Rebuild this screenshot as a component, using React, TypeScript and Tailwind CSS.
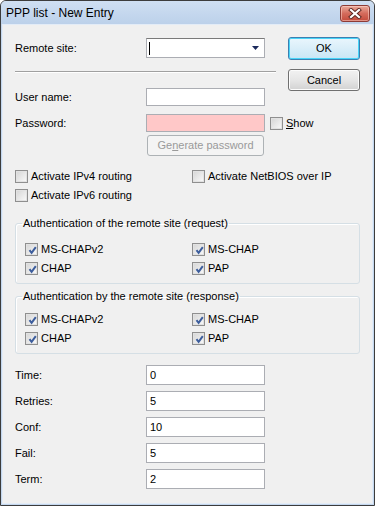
import React from "react";

const font = { fontFamily: '"Liberation Sans", Arial, sans-serif' };

function CheckBox({ checked = false }: { checked?: boolean }) {
  return (
    <span className="relative inline-flex h-[13px] w-[13px] shrink-0 items-center justify-center border border-[#8f8f8f] bg-white">
      <span className="h-[11px] w-[11px] border border-[#e2e2e2] bg-gradient-to-br from-[#d8d8d8] to-[#f7f7f7]" />
      {checked && (
        <svg className="absolute left-[1px] top-[1px]" width="11" height="11" viewBox="0 0 11 11">
          <path d="M2.5 5.2 L4.6 7.8 L8.8 2.2" fill="none" stroke="#3c5d9c" strokeWidth="2" />
        </svg>
      )}
    </span>
  );
}

function Check({ label, checked, children }: { label?: string; checked?: boolean; children?: React.ReactNode }) {
  return (
    <label className="flex h-[13px] items-center gap-[3px] whitespace-nowrap text-[11px] leading-[13px] text-black">
      <CheckBox checked={checked} />
      <span>{children ?? label}</span>
    </label>
  );
}

function TextBox({ value = "", pink = false, h = "h-[18px]" }: { value?: string; pink?: boolean; h?: string }) {
  return (
    <div
      className={`${h} flex w-[119px] shrink-0 items-center border border-[#abadb3] pl-[3px] text-[11px] leading-[16px] text-black ${
        pink ? "bg-[#ffc8c8]" : "bg-white"
      }`}
    >
      {value}
    </div>
  );
}

function Row({ label, children, h = "h-[18px]" }: { label: string; children: React.ReactNode; h?: string }) {
  return (
    <div className={`flex items-center ${h}`}>
      <span className="w-[131px] shrink-0 text-[11px] text-black">{label}</span>
      {children}
    </div>
  );
}

function Group({ title, mt, pt }: { title: string; mt: string; pt: string }) {
  return (
    <fieldset
      className={`${mt} mr-[12px] rounded-[3px] border border-[#d5dfe5] pb-[8px] shadow-[inset_1px_1px_0_#ffffff]`}
    >
      <legend className="ml-[6px] px-[1px] text-[11px] leading-[14px] text-black">{title}</legend>
      <div className={`grid grid-cols-[167px_1fr] gap-y-[6px] pl-[9px] ${pt}`}>
        <Check label="MS-CHAPv2" checked />
        <Check label="MS-CHAP" checked />
        <Check label="CHAP" checked />
        <Check label="PAP" checked />
      </div>
    </fieldset>
  );
}

export default function App() {
  return (
    <div className="h-[506px] w-[375px] bg-white" style={font}>
      <div className="flex h-full w-full flex-col rounded-t-[6px] border border-[#3c3c3c] bg-[#c4d7ee]">
        {/* Title bar */}
        <div className="flex h-[23px] shrink-0 items-start justify-between rounded-t-[5px] bg-gradient-to-b from-[#cfdff2] to-[#bcd1ea] pl-[5px] pr-[4px]">
          <span className="mt-[5px] text-[12px] leading-[14px] text-black">PPP list - New Entry</span>
          <div className="mt-[4px] flex h-[17px] w-[30px] items-center justify-center rounded-[3px] border border-[#8d3b36] bg-gradient-to-b from-[#e9a99b] via-[#d46b5c] to-[#c44a3b] shadow-[inset_0_0_0_1px_rgba(255,220,210,0.5)]">
            <svg width="14" height="11" viewBox="0 0 14 11">
              <path d="M3 2 L11 9 M11 2 L3 9" stroke="#5a2520" strokeWidth="4" strokeLinecap="square" />
              <path d="M3 2 L11 9 M11 2 L3 9" stroke="#ffffff" strokeWidth="2.2" strokeLinecap="square" />
            </svg>
          </div>
        </div>

        {/* Client area */}
        <div className="mx-[1px] mb-[1px] flex-1 border border-[#e3ecf7] bg-[#f0f0f0] pl-[12px] pt-[12px]">
          <div className="flex">
            <div className="w-[261px] shrink-0">
              <div className="mt-[1px]">
                <Row label="Remote site:" h="h-[20px]">
                  <div className="flex h-[20px] w-[119px] shrink-0 items-center justify-between border border-[#abadb3] border-t-[#7a7a7a] bg-white pl-[2px] pr-[5px]">
                    <span className="h-[13px] w-[1px] bg-black" />
                    <svg width="7" height="4" viewBox="0 0 7 4">
                      <path d="M0 0 H7 L3.5 4 Z" fill="#1b2a5c" />
                    </svg>
                  </div>
                </Row>
              </div>
              <div className="mt-[13px] h-[2px] border-t border-[#a0a0a0] border-b border-b-white" />
              <div className="mt-[15px]">
                <Row label="User name:">
                  <TextBox />
                </Row>
              </div>
              <div className="mt-[8px]">
                <Row label="Password:">
                  <TextBox pink />
                  <div className="ml-[5px]">
                    <Check>
                      <span className="underline">S</span>how
                    </Check>
                  </div>
                </Row>
              </div>
              <button className="ml-[132px] mt-[3px] flex h-[21px] w-[117px] items-center justify-center rounded-[3px] border border-[#adb2b5] bg-[#f4f4f4] text-[11px] text-[#9a9a9a]">
                Ge<span className="underline">n</span>erate password
              </button>
            </div>
            <div className="ml-[12px] flex w-[72px] flex-col">
              <button className="flex h-[23px] items-center justify-center rounded-[3px] border border-[#3c7fb1] bg-gradient-to-b from-[#eaf6fd] to-[#c8e6f5] text-[11px] text-black shadow-[inset_0_0_0_1px_#48d4f8]">
                OK
              </button>
              <button className="mt-[9px] flex h-[22px] items-center justify-center rounded-[3px] border border-[#707070] bg-gradient-to-b from-[#f2f2f2] via-[#e6e6e6] to-[#d2d2d2] text-[11px] text-black shadow-[inset_0_0_0_1px_#fcfcfc]">
                Cancel
              </button>
            </div>
          </div>

          <div className="mt-[14px] grid grid-cols-[177px_1fr] gap-y-[6px]">
            <Check label="Activate IPv4 routing" />
            <Check label="Activate NetBIOS over IP" />
            <Check label="Activate IPv6 routing" />
          </div>

          <Group title="Authentication of the remote site (request)" mt="mt-[14px]" pt="pt-[13px]" />
          <Group title="Authentication by the remote site (response)" mt="mt-[5px]" pt="pt-[10px]" />

          <div className="mt-[11px] flex flex-col gap-[6px]">
            <Row label="Time:" h="h-[20px]"><TextBox value="0" h="h-[20px]" /></Row>
            <Row label="Retries:" h="h-[20px]"><TextBox value="5" h="h-[20px]" /></Row>
            <Row label="Conf:" h="h-[20px]"><TextBox value="10" h="h-[20px]" /></Row>
            <Row label="Fail:" h="h-[20px]"><TextBox value="5" h="h-[20px]" /></Row>
            <Row label="Term:" h="h-[20px]"><TextBox value="2" h="h-[20px]" /></Row>
          </div>
        </div>
      </div>
    </div>
  );
}
